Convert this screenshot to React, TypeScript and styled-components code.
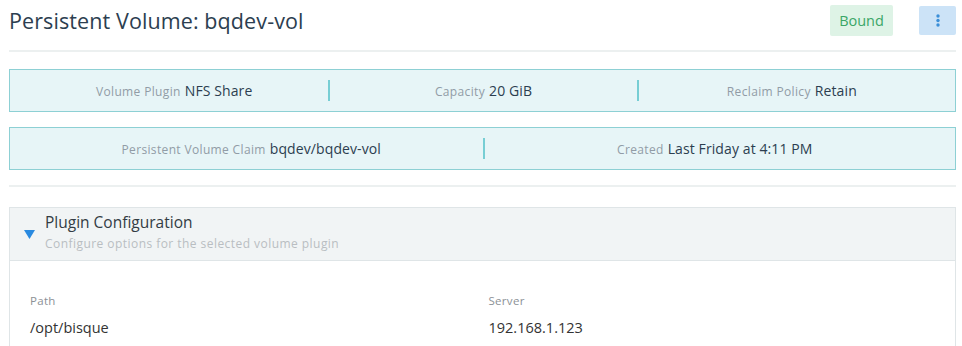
import React from "react";
import styled, { createGlobalStyle } from "styled-components";

const Global = createGlobalStyle`
  html, body { margin: 0; padding: 0; background: #fff; }
  body { font-family: "Open Sans", "Noto Sans", sans-serif; color: #2c3e50; }
  * { box-sizing: border-box; }
`;

const Page = styled.div`
  padding: 4px 6px 0 9px;
`;

const Header = styled.div`
  display: flex;
  align-items: center;
  height: 32px;
`;

const Title = styled.h1`
  flex: 1;
  margin: 0;
  font-family: "Open Sans", sans-serif;
  font-weight: 400;
  font-size: 21.5px;
  letter-spacing: 0.1px;
  color: #2c3e50;
`;

const Badge = styled.div`
  display: flex;
  align-items: center;
  justify-content: center;
  width: 63px;
  height: 31px;
  background: #def3e6;
  color: #3aa666;
  border-radius: 2px;
  font-size: 14.5px;
`;

const MenuButton = styled.button`
  margin-left: 26px;
  width: 37px;
  height: 29px;
  border: none;
  padding: 0;
  border-radius: 2px;
  background: #cce3f7;
  display: flex;
  align-items: center;
  justify-content: center;
`;

const Rule = styled.hr<{ $top: number }>`
  border: none;
  height: 2px;
  background: #ecf0f0;
  margin: ${(p) => p.$top}px 0 0 0;
`;

const InfoBox = styled.div<{ $cols: number; $top: number }>`
  display: grid;
  grid-template-columns: repeat(${(p) => p.$cols}, 1fr);
  align-items: center;
  height: 43px;
  margin-top: ${(p) => p.$top}px;
  padding: 0 10px;
  background: #e7f5f7;
  border: 1px solid #8dd0d4;
`;

const InfoItem = styled.div<{ $first?: boolean }>`
  display: flex;
  align-items: baseline;
  justify-content: center;
  gap: 4px;
  height: 21px;
  line-height: 21px;
  border-left: ${(p) => (p.$first ? "none" : "2px solid #77ced4")};
`;

const InfoLabel = styled.span`
  font-size: 12px;
  letter-spacing: 0.35px;
  color: #919ca6;
`;

const InfoValue = styled.span`
  font-size: 14px;
  letter-spacing: 0.1px;
  color: #2c3e50;
`;

const Panel = styled.section`
  margin-top: 20px;
  border: 1px solid #dfe5e7;
  border-bottom: none;
`;

const PanelHead = styled.div`
  display: flex;
  align-items: center;
  height: 53px;
  padding-left: 14px;
  background: #f1f4f5;
  border-bottom: 1px solid #dfe5e7;
`;

const Caret = styled.svg`
  width: 11px;
  height: 9px;
  margin-top: 0;
  margin-right: 10px;
`;

const HeadText = styled.div`
  display: flex;
  flex-direction: column;
  margin-top: -3px;
`;

const PanelTitle = styled.div`
  font-size: 15.5px;
  color: #333c44;
  line-height: 20px;
`;

const PanelSub = styled.div`
  margin-top: 3px;
  font-size: 12px;
  color: #b9bec2;
  line-height: 18px;
  letter-spacing: 0.45px;
`;

const PanelBody = styled.div`
  display: grid;
  grid-template-columns: 1fr 1fr;
  column-gap: 12px;
  padding: 32px 20px 10px 20px;
`;

const Field = styled.div`
  display: flex;
  flex-direction: column;
`;

const FieldLabel = styled.div`
  font-size: 11.5px;
  color: #8c9196;
  line-height: 16px;
  letter-spacing: 0.3px;
`;

const FieldValue = styled.div`
  margin-top: 9px;
  font-size: 14.5px;
  color: #333;
  line-height: 20px;
`;

const rows1 = [
  { label: "Volume Plugin", value: "NFS Share" },
  { label: "Capacity", value: "20 GiB" },
  { label: "Reclaim Policy", value: "Retain" },
];

const rows2 = [
  { label: "Persistent Volume Claim", value: "bqdev/bqdev-vol" },
  { label: "Created", value: "Last Friday at 4:11 PM" },
];

export default function App() {
  return (
    <>
      <Global />
      <Page>
        <Header>
          <Title>Persistent Volume: bqdev-vol</Title>
          <Badge>Bound</Badge>
          <MenuButton aria-label="menu">
            <svg width="4" height="13" viewBox="0 0 4 13">
              <circle cx="2" cy="2" r="1.7" fill="#3b8fd8" />
              <circle cx="2" cy="6.5" r="1.7" fill="#3b8fd8" />
              <circle cx="2" cy="11" r="1.7" fill="#3b8fd8" />
            </svg>
          </MenuButton>
        </Header>
        <Rule $top={14} />
        <InfoBox $cols={3} $top={17}>
          {rows1.map((r, i) => (
            <InfoItem key={r.label} $first={i === 0}>
              <InfoLabel>{r.label}</InfoLabel>
              <InfoValue>{r.value}</InfoValue>
            </InfoItem>
          ))}
        </InfoBox>
        <InfoBox $cols={2} $top={15}>
          {rows2.map((r, i) => (
            <InfoItem key={r.label} $first={i === 0}>
              <InfoLabel>{r.label}</InfoLabel>
              <InfoValue>{r.value}</InfoValue>
            </InfoItem>
          ))}
        </InfoBox>
        <Rule $top={15} />
        <Panel>
          <PanelHead>
            <Caret viewBox="0 0 11 9">
              <polygon points="0,0 11,0 5.5,9" fill="#2a8ae0" />
            </Caret>
            <HeadText>
              <PanelTitle>Plugin Configuration</PanelTitle>
              <PanelSub>Configure options for the selected volume plugin</PanelSub>
            </HeadText>
          </PanelHead>
          <PanelBody>
            <Field>
              <FieldLabel>Path</FieldLabel>
              <FieldValue>/opt/bisque</FieldValue>
            </Field>
            <Field>
              <FieldLabel>Server</FieldLabel>
              <FieldValue>192.168.1.123</FieldValue>
            </Field>
          </PanelBody>
        </Panel>
      </Page>
    </>
  );
}
